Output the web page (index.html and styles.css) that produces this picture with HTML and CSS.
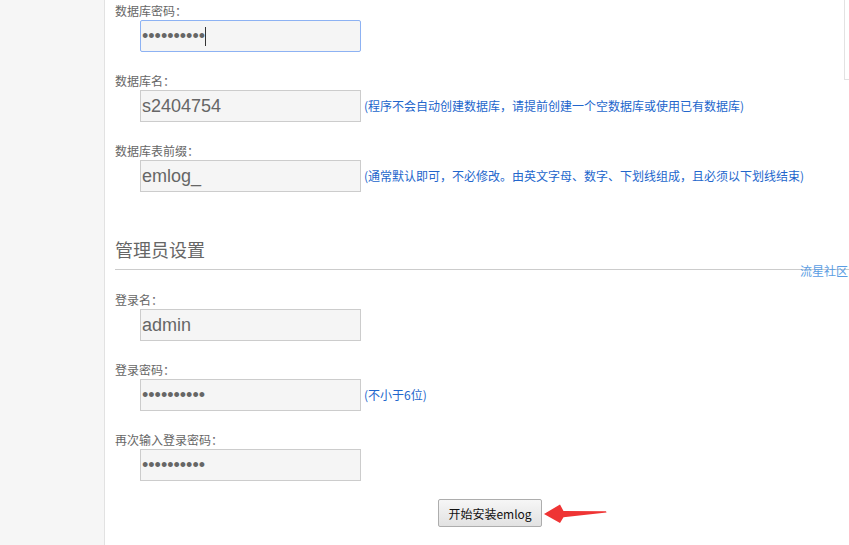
FILE: index.html
```html
<!DOCTYPE html>
<html lang="zh-CN">
<head>
<meta charset="utf-8">
<title>emlog 安装</title>
<link rel="stylesheet" href="styles.css">
</head>
<body>
<div class="page">
  <aside class="side"></aside>
  <main class="main">
    <div class="group">
      <div class="label">数据库密码：</div>
      <div class="row">
        <div class="field focus"><span class="val">••••••••••</span><span class="caret"></span></div>
      </div>
    </div>
    <div class="group">
      <div class="label">数据库名：</div>
      <div class="row">
        <div class="field"><span class="val">s2404754</span></div>
        <span class="hint">(程序不会自动创建数据库，请提前创建一个空数据库或使用已有数据库)</span>
      </div>
    </div>
    <div class="group">
      <div class="label">数据库表前缀：</div>
      <div class="row">
        <div class="field"><span class="val">emlog_</span></div>
        <span class="hint">(通常默认即可，不必修改。由英文字母、数字、下划线组成，且必须以下划线结束)</span>
      </div>
    </div>

    <h2 class="section">管理员设置</h2>
    <div class="rule"><span class="mark">流星社区</span></div>

    <div class="group">
      <div class="label">登录名：</div>
      <div class="row">
        <div class="field"><span class="val">admin</span></div>
      </div>
    </div>
    <div class="group">
      <div class="label">登录密码：</div>
      <div class="row">
        <div class="field"><span class="val">••••••••••</span></div>
        <span class="hint">(不小于6位)</span>
      </div>
    </div>
    <div class="group last">
      <div class="label">再次输入登录密码：</div>
      <div class="row">
        <div class="field"><span class="val">••••••••••</span></div>
      </div>
    </div>

    <div class="actions">
      <button class="btn" type="button">开始安装emlog</button>
      <svg class="arrow" width="68" height="26" viewBox="0 0 68 26" aria-hidden="true">
        <path d="M2 14 L18 4.5 L21.5 11 L64 11.2 L64.5 12.4 L21.5 17.2 L18 23 Z" fill="#ef3434"/>
      </svg>
    </div>
  </main>
  <div class="edge"></div>
</div>
</body>
</html>
```
FILE: styles.css
```css
html, body {
  margin: 0;
  padding: 0;
  background: #ffffff;
  height: 100%;
  overflow: hidden;
}
body {
  font-family: "Noto Sans CJK SC", "Liberation Sans", sans-serif;
  font-size: 12px;
  color: #666;
}
.page {
  position: relative;
  display: flex;
  min-height: 545px;
}
.side {
  width: 104px;
  flex: none;
  background: #f6f6f6;
  border-right: 1px solid #e2e2e2;
}
.main {
  flex: 1;
  padding: 2px 0 0 10px;
  min-width: 0;
}
.group {
  padding-bottom: 20px;
}
.group.last {
  padding-bottom: 18px;
}
.label {
  line-height: 18px;
  height: 18px;
  color: #666;
}
.row {
  display: flex;
  align-items: center;
  margin-left: 25px;
}
.field {
  box-sizing: border-box;
  width: 221px;
  height: 32px;
  border: 1px solid #cccccc;
  background: #f5f5f5;
  padding: 0 1px;
  display: flex;
  align-items: center;
  font-family: "Liberation Sans", Arial, sans-serif;
  font-size: 18px;
  color: #666;
}
.field.focus {
  border-color: #8db2f3;
  border-radius: 2px;
}
.caret {
  display: inline-block;
  width: 1px;
  height: 19px;
  background: #333;
}
.hint {
  margin-left: 3px;
  color: #2366cc;
  font-size: 12px;
  line-height: 18px;
  white-space: nowrap;
}
.section {
  margin: 24px 0 0 0;
  font-size: 18px;
  font-weight: normal;
  line-height: 26px;
  color: #666;
}
.rule {
  position: relative;
  margin: 7px 0 21px 0;
  border-top: 1px solid #cccccc;
  height: 0;
}
.mark {
  position: absolute;
  right: 1px;
  top: -7px;
  line-height: 16px;
  font-size: 12px;
  color: #5a9de3;
}
.actions {
  display: flex;
  align-items: center;
  padding-left: 323px;
}
.btn {
  box-sizing: border-box;
  width: 104px;
  height: 28px;
  padding: 0;
  border: 1px solid #adadad;
  border-radius: 2px;
  background: linear-gradient(#f6f6f6, #e2e2e2);
  font-family: "Noto Sans CJK SC", "Liberation Sans", sans-serif;
  font-size: 12px;
  color: #111;
}
.arrow {
  display: block;
}
.edge {
  position: absolute;
  left: 844px;
  top: 0;
  width: 5px;
  height: 79px;
  border-left: 1px solid #e2e2e2;
  border-bottom: 1px solid #e2e2e2;
}
```
